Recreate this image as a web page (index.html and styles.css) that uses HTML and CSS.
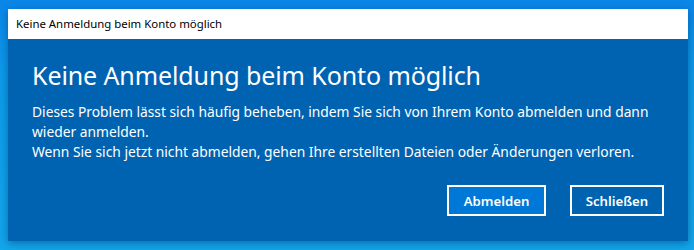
FILE: index.html
```html
<!DOCTYPE html>
<html lang="de">
<head>
    <meta charset="UTF-8">
    <meta name="viewport" content="width=device-width, initial-scale=1.0">
    <title>Keine Anmeldung beim Konto möglich</title>
    <link rel="stylesheet" href="styles.css">
</head>
<body>

<div class="desktop">
    <div class="window">
        <div class="titlebar">Keine Anmeldung beim Konto möglich</div>
        <div class="dialog">
            <h1>Keine Anmeldung beim Konto möglich</h1>
            <p>
                Dieses Problem lässt sich häufig beheben, indem Sie sich von Ihrem Konto abmelden und dann<br>
                wieder anmelden.<br>
                Wenn Sie sich jetzt nicht abmelden, gehen Ihre erstellten Dateien oder Änderungen verloren.
            </p>
            <div class="actions">
                <button class="btn primary">Abmelden</button>
                <button class="btn">Schließen</button>
            </div>
        </div>
    </div>
</div>

</body>
</html>
```

FILE: styles.css
```css
/* Desktop-Hintergrund */
body {
    margin: 0;
    font-family: "Noto Sans", "Open Sans", sans-serif;
    overflow: hidden;
}
.desktop {
    width: 694px;
    height: 250px;
    padding: 9px 6px 0 8px;
    box-sizing: border-box;
    background: linear-gradient(180deg, #0a86e8 0%, #0c9be8 30%, #12a6ea 100%);
}
.window {
    width: 680px;
    box-shadow: 0 2px 8px rgba(0, 40, 90, 0.45);
}
.titlebar {
    height: 30px;
    line-height: 30px;
    padding-left: 8px;
    background-color: #fff;
    color: #000;
    font-size: 11.4px;
}
.dialog {
    background-color: #0063b1;
    color: #fff;
    padding: 18px 24px 25px 24px;
}
h1 {
    margin: 0 0 9px;
    font-size: 25px;
    font-weight: 400;
    line-height: 36px;
    letter-spacing: -0.1px;
}
p {
    margin: 0;
    font-size: 13.8px;
    line-height: 20px;
}
.actions {
    display: flex;
    justify-content: flex-end;
    gap: 24px;
    margin-top: 23px;
}
.btn {
    width: 94px;
    height: 31px;
    padding: 0;
    border: 2px solid #fff;
    background-color: #0063b1;
    color: #fff;
    font-family: inherit;
    font-size: 13.2px;
    font-weight: 600;
    cursor: pointer;
}
.btn.primary {
    width: 99px;
    background-color: #0078d7;
}
```
